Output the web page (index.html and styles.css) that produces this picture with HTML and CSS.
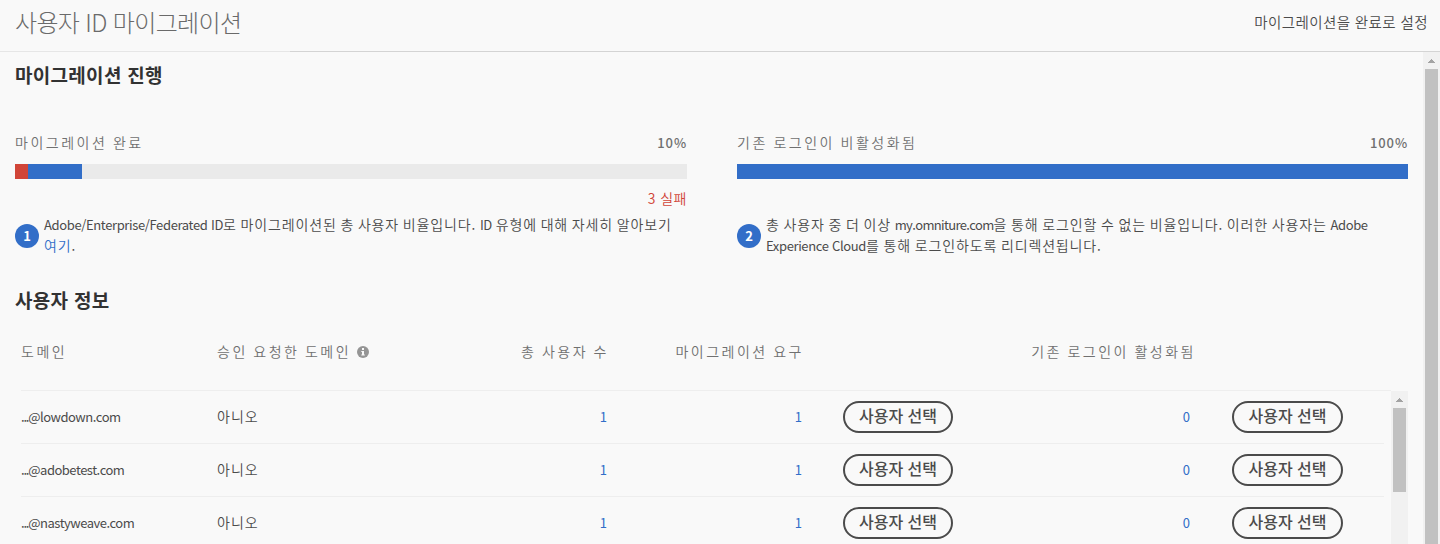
FILE: index.html
```html
<!DOCTYPE html>
<html lang="ko">
<head>
<meta charset="utf-8">
<title>사용자 ID 마이그레이션</title>
<link rel="stylesheet" href="styles.css">
</head>
<body>
<header class="topbar">
  <h1 class="title">사용자 ID 마이그레이션</h1>
  <a class="action">마이그레이션을 완료로 설정</a>
</header>
<div class="divider"></div>
<div class="view">
  <main class="content">
    <h2 class="heading">마이그레이션 진행</h2>
    <div class="progress-grid">
      <section>
        <div class="progress-head"><span class="label">마이그레이션 완료</span><span class="percent">10%</span></div>
        <div class="bar"><div class="bar-failed"></div><div class="bar-done bar-partial"></div></div>
        <div class="failed">3 실패</div>
        <div class="note"><span class="badge">1</span>
          <p><span class="latin">Adobe/Enterprise/Federated ID</span>로 마이그레이션된 총 사용자 비율입니다. <span class="latin">ID</span> 유형에 대해 자세히 알아보기<br><a class="link">여기</a>.</p></div>
      </section>
      <section>
        <div class="progress-head"><span class="label">기존 로그인이 비활성화됨</span><span class="percent">100%</span></div>
        <div class="bar"><div class="bar-done bar-full"></div></div>
        <div class="failed"></div>
        <div class="note"><span class="badge">2</span>
          <p>총 사용자 중 더 이상 <span class="latin host">my.omniture.com</span>을 통해 로그인할 수 없는 비율입니다. 이러한 사용자는 <span class="latin">Adobe</span><br><span class="latin">Experience Cloud</span>를 통해 로그인하도록 리디렉션됩니다.</p></div>
      </section>
    </div>
    <h2 class="heading heading-users">사용자 정보</h2>
    <div class="table">
      <div class="row table-head">
        <span>도메인</span>
        <span class="with-icon">승인 요청한 도메인
          <svg class="info" viewBox="0 0 12 12"><circle cx="6" cy="6" r="6" fill="#959595"/><path d="M5 2h2v2H5zM4.3 5H7v3.4h.8v1H4.3v-1H5V6h-.7z" fill="#f9f9f9"/></svg></span>
        <span class="num">총 사용자 수</span>
        <span class="num">마이그레이션 요구</span>
        <span></span>
        <span class="num">기존 로그인이 활성화됨</span>
        <span></span>
      </div>
      <div class="table-body">
        <div class="rows">
          <div class="row"><span class="domain"><span class="dots">...</span>@lowdown.com</span><span class="approved">아니오</span><a class="num link">1</a><a class="num link">1</a><button class="pick">사용자 선택</button><a class="num link">0</a><button class="pick pick-wide">사용자 선택</button></div>
          <div class="row"><span class="domain"><span class="dots">...</span>@adobetest.com</span><span class="approved">아니오</span><a class="num link">1</a><a class="num link">1</a><button class="pick">사용자 선택</button><a class="num link">0</a><button class="pick pick-wide">사용자 선택</button></div>
          <div class="row"><span class="domain"><span class="dots">...</span>@nastyweave.com</span><span class="approved">아니오</span><a class="num link">1</a><a class="num link">1</a><button class="pick">사용자 선택</button><a class="num link">0</a><button class="pick pick-wide">사용자 선택</button></div>
        </div>
        <div class="scrollbar"><svg class="arrow" viewBox="0 0 7 4"><path d="M3 0h1v1h1v1h1v1h1v1H0V3h1V2h1V1h1z" fill="#a3a3a3"/></svg><div class="thumb thumb-inner"></div></div>
      </div>
    </div>
  </main>
  <div class="scrollbar"><svg class="arrow" viewBox="0 0 7 4"><path d="M3 0h1v1h1v1h1v1h1v1H0V3h1V2h1V1h1z" fill="#a3a3a3"/></svg><div class="thumb"></div></div>
</div>
</body>
</html>
```
FILE: styles.css
```css
* { box-sizing: border-box; }
body {
  margin: 0;
  height: 544px;
  overflow: hidden;
  background: #f9f9f9;
  color: #4b4b4b;
  font-family: "Noto Sans CJK KR", "Noto Sans", sans-serif;
  font-size: 14px;
  font-weight: 350;
  line-height: 20px;
}
h1, h2, p { margin: 0; }
.topbar {
  display: flex;
  justify-content: space-between;
  align-items: center;
  height: 51px;
  padding: 0 12px 7px 15px;
}
.title {
  font-size: 24px;
  line-height: 34px;
  font-weight: 200;
  letter-spacing: -0.65px;
  color: #6a6a6a;
}
.action { font-size: 14.5px; letter-spacing: 0.4px; }
.divider {
  height: 1px;
  background: linear-gradient(to right, #e6e6e6 290px, #d4d4d4 290px);
}
.view { display: flex; height: 492px; }
.content { flex: 1; padding: 9px 15px 0 15px; overflow: hidden; }
.heading {
  font-size: 19px;
  line-height: 28px;
  font-weight: 600;
  letter-spacing: 0.3px;
  color: #323232;
}
.heading-users { margin-top: 30px; }
.progress-grid {
  display: grid;
  grid-template-columns: 672px 671px;
  column-gap: 50px;
  padding-top: 43px;
}
.progress-head {
  display: flex;
  justify-content: space-between;
  height: 32px;
  color: #707070;
}
.label { letter-spacing: 2.5px; word-spacing: -0.8px; }
.percent { letter-spacing: 0.9px; font-weight: 500; font-size: 13px; padding-top: 1px; }
.bar { display: flex; height: 15px; background: #eaeaea; }
.bar-failed { width: 13px; background: #d14538; }
.bar-done { background: #326ec8; }
.bar-partial { width: 54px; }
.bar-full { width: 100%; }
.failed {
  height: 35px;
  padding-top: 9px;
  text-align: right;
  letter-spacing: 0.5px;
  color: #d14538;
}
.note { display: flex; gap: 5px; align-items: center; line-height: 21px; }
.note p { white-space: nowrap; letter-spacing: 0.85px; word-spacing: -1px; }
.note .latin { font-size: 13px; font-weight: 400; letter-spacing: -0.37px; word-spacing: 0.3px; }
.note .host { letter-spacing: -0.65px; }
.badge {
  flex: none;
  width: 24px;
  height: 24px;
  margin-top: 1px;
  border-radius: 50%;
  background: #326ec8;
  color: #fff;
  font-size: 13px;
  font-weight: 700;
  line-height: 24px;
  text-align: center;
}
.link { color: #326ec8; }
.table { padding-left: 6px; }
.row {
  display: grid;
  align-items: center;
  height: 53px;
  width: 1363px;
  border-bottom: 1px solid #eeeeee;
}
.table-head {
  height: 77px;
  padding-bottom: 2px;
  width: 1370px;
  color: #707070;
  letter-spacing: 2.5px;
  word-spacing: -0.9px;
  white-space: nowrap;
  grid-template-columns: 196px 190px 202px 195px 42px 350px 153px;
}
.num { text-align: right; }
.with-icon { display: flex; align-items: center; gap: 6px; }
.info { width: 12px; height: 12px; margin-top: 2px; }
.table-body { display: flex; height: 160px; }
.rows { flex: 1; }
.rows .row { grid-template-columns: 196px 190px 204px 195px 147px 237px 153px; }
.rows .num { font-size: 13px; font-weight: 400; padding: 0 4px 0 0; }
.rows .pick + .num { padding-right: 0; }
.domain { font-weight: 400; font-size: 13px; letter-spacing: -0.5px; }
.dots { letter-spacing: -1.2px; }
.approved { letter-spacing: 1px; padding-bottom: 2px; }
.pick {
  justify-self: end;
  width: 110px;
  height: 32px;
  padding: 0 0 3px;
  border: 2px solid #4b4b4b;
  border-radius: 16px;
  background: transparent;
  color: #4b4b4b;
  font: 500 16px/25px "Noto Sans CJK KR", sans-serif;
}
.pick-wide { width: 111px; }
.scrollbar {
  display: flex;
  flex-direction: column;
  align-items: center;
  width: 17px;
  background: #f1f1f1;
}
.arrow { flex: none; width: 7px; height: 4px; margin: 7px 0 6px; }
.thumb { width: 13px; flex: 1; background: #c1c1c1; }
.thumb-inner { flex: none; height: 84px; }
```
